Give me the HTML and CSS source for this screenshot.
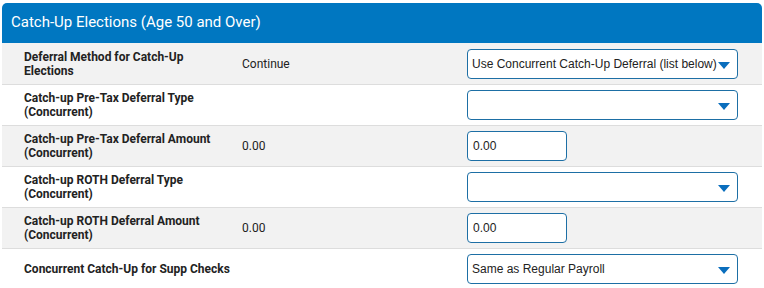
FILE: index.html
```html
<!DOCTYPE html>
<html lang="en">
<head>
    <meta charset="UTF-8">
    <title>Catch-Up Elections</title>
    <link rel="stylesheet" href="styles.css">
</head>
<body>
    <div class="panel">
        <div class="panel-header">Catch-Up Elections (Age 50 and Over)</div>

        <div class="row shaded first">
            <div class="label">Deferral Method for Catch-Up Elections</div>
            <div class="value">Continue</div>
            <div class="control">
                <div class="select">Use Concurrent Catch-Up Deferral (list below)<span class="arrow"></span></div>
            </div>
        </div>

        <div class="row">
            <div class="label">Catch-up Pre-Tax Deferral Type (Concurrent)</div>
            <div class="value"></div>
            <div class="control">
                <div class="select"><span class="arrow"></span></div>
            </div>
        </div>

        <div class="row shaded">
            <div class="label">Catch-up Pre-Tax Deferral Amount (Concurrent)</div>
            <div class="value">0.00</div>
            <div class="control">
                <input class="amount" type="text" value="0.00">
            </div>
        </div>

        <div class="row">
            <div class="label">Catch-up ROTH Deferral Type (Concurrent)</div>
            <div class="value"></div>
            <div class="control">
                <div class="select"><span class="arrow"></span></div>
            </div>
        </div>

        <div class="row shaded">
            <div class="label">Catch-up ROTH Deferral Amount (Concurrent)</div>
            <div class="value">0.00</div>
            <div class="control">
                <input class="amount" type="text" value="0.00">
            </div>
        </div>

        <div class="row last">
            <div class="label">Concurrent Catch-Up for Supp Checks</div>
            <div class="value"></div>
            <div class="control">
                <div class="select">Same as Regular Payroll<span class="arrow"></span></div>
            </div>
        </div>
    </div>
</body>
</html>
```

FILE: styles.css
```css
/* General */
body {
    margin: 0;
    padding: 3px 2px 0 2px;
    background: #fff;
    font-family: Roboto, Arial, sans-serif;
    color: #222;
}

/* Panel */
.panel {
    width: 760px;
}

.panel-header {
    background: #0077c1;
    color: #fff;
    font-size: 15px;
    height: 40px;
    line-height: 38px;
    padding-left: 9px;
    border-radius: 5px 5px 0 0;
}

/* Rows */
.row {
    display: grid;
    grid-template-columns: 218px 225px 1fr;
    align-items: center;
    height: 40px;
    padding-left: 22px;
    border-bottom: 1px solid #ddd;
}

.row.shaded {
    background: #f2f2f2;
}

.row.first {
    height: 41px;
}

.row.last {
    border-bottom: none;
}

.label {
    font-size: 12px;
    font-weight: bold;
    line-height: 14px;
    padding-right: 10px;
}

.value {
    font-size: 12px;
}

/* Controls */
.select {
    box-sizing: border-box;
    width: 271px;
    height: 30px;
    border: 1px solid #1d6fa5;
    border-radius: 4px;
    background: #fff;
    font-family: "Liberation Sans", Arial, sans-serif;
    font-size: 12px;
    line-height: 28px;
    padding-left: 4px;
    position: relative;
}

.arrow {
    position: absolute;
    right: 7px;
    top: 12px;
    width: 0;
    height: 0;
    border-left: 6px solid transparent;
    border-right: 6px solid transparent;
    border-top: 7px solid #0a6ebd;
}

.amount {
    box-sizing: border-box;
    width: 100px;
    height: 30px;
    border: 1px solid #1d6fa5;
    border-radius: 4px;
    padding: 0 5px;
    font-family: "Liberation Sans", Arial, sans-serif;
    font-size: 12px;
    color: #222;
}
```
